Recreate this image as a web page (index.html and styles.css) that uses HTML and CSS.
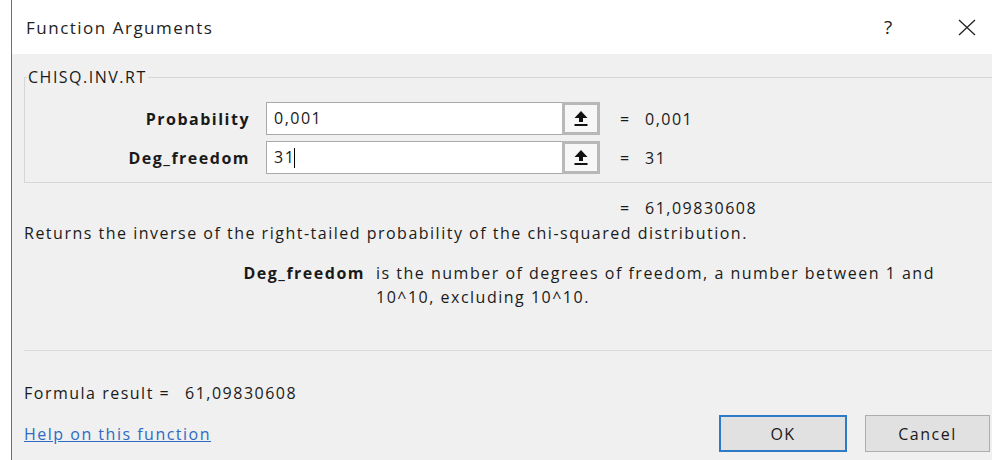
FILE: index.html
```html
<!DOCTYPE html>
<html lang="en">
<head>
<meta charset="utf-8">
<title>Function Arguments</title>
<link rel="stylesheet" href="styles.css">
</head>
<body>
<div class="dialog">
  <header class="titlebar">
    <span class="title">Function Arguments</span>
    <div class="title-actions">
      <span class="help-btn">?</span>
      <span class="close-btn">
        <svg width="18" height="17" viewBox="0 0 18 17"><path d="M1 1 L17 16 M17 1 L1 16" stroke="#222" stroke-width="1.3" fill="none"/></svg>
      </span>
    </div>
  </header>
  <main class="body">
    <fieldset class="group">
      <legend class="group-name">CHISQ.INV.RT</legend>
      <div class="arg-grid">
        <label class="arg-label">Probability</label>
        <div class="ref-field">
          <span class="ref-input">0,001</span>
          <span class="ref-btn">
            <svg width="14" height="16" viewBox="0 0 14 16"><path d="M7 0 L13.5 7 L9 7 L9 11 L5 11 L5 7 L0.5 7 Z" fill="#111"/><rect x="0.5" y="13" width="13" height="2" fill="#111"/></svg>
          </span>
        </div>
        <span class="eq">=</span>
        <span class="arg-value">0,001</span>

        <label class="arg-label">Deg_freedom</label>
        <div class="ref-field">
          <span class="ref-input">31<span class="caret"></span></span>
          <span class="ref-btn">
            <svg width="14" height="16" viewBox="0 0 14 16"><path d="M7 0 L13.5 7 L9 7 L9 11 L5 11 L5 7 L0.5 7 Z" fill="#111"/><rect x="0.5" y="13" width="13" height="2" fill="#111"/></svg>
          </span>
        </div>
        <span class="eq">=</span>
        <span class="arg-value">31</span>
      </div>
    </fieldset>

    <div class="result-line"><span class="eq">=</span><span>61,09830608</span></div>
    <p class="description">Returns the inverse of the right-tailed probability of the chi-squared distribution.</p>

    <div class="arg-help">
      <span class="arg-help-name">Deg_freedom</span>
      <span class="arg-help-text">is the number of degrees of freedom, a number between 1 and 10^10, excluding 10^10.</span>
    </div>

    <hr class="separator">

    <div class="formula-result"><span class="formula-label">Formula result =</span><span>61,09830608</span></div>

    <footer class="footer">
      <a class="help-link" href="#">Help on this function</a>
      <div class="buttons">
        <button class="btn btn-default">OK</button>
        <button class="btn">Cancel</button>
      </div>
    </footer>
  </main>
</div>
</body>
</html>
```

FILE: styles.css
```css
html, body {
  margin: 0;
  height: 100%;
  overflow: hidden;
  background: #ffffff;
}

body {
  font-family: "Open Sans", "Noto Sans", sans-serif;
  font-size: 16px;
  letter-spacing: 1.5px;
  color: #1a1a1a;
}

.dialog {
  margin-left: 11px;
  height: 100%;
  border-left: 1px solid #6e6e6e;
  display: flex;
  flex-direction: column;
}

.titlebar {
  height: 54px;
  flex: none;
  background: #ffffff;
  display: flex;
  align-items: center;
  padding-left: 14px;
}

.title {
  font-size: 17px;
  color: #222;
}

.title-actions {
  margin-left: auto;
  display: flex;
  align-items: center;
}

.help-btn {
  width: 20px;
  text-align: center;
  font-size: 19px;
  letter-spacing: 0;
  color: #222;
  margin-right: 60px;
}

.close-btn {
  display: flex;
  margin-right: 16px;
}

.body {
  flex: 1;
  background: #f0f0f0;
  padding: 0 2px 0 12px;
  display: flex;
  flex-direction: column;
}

.group {
  margin: 12px -30px 0 0;
  padding: 14px 0 8px 0;
  border: 1px solid #d6d6d6;
  min-width: 0;
}

.group-name {
  padding: 0 1px;
  margin-left: 2px;
  line-height: 22px;
  font-size: 16px;
}

.arg-grid {
  display: grid;
  grid-template-columns: 241px 334px 45px auto;
  row-gap: 6px;
  align-items: center;
}

.arg-label {
  font-weight: bold;
  text-align: right;
  padding-right: 16px;
}

.arg-grid .eq {
  padding-left: 20px;
}

.ref-field {
  display: flex;
  height: 33px;
  box-sizing: border-box;
  border: 1px solid #a9a9a9;
  background: #ffffff;
}

.ref-input {
  flex: 1;
  padding-left: 7px;
  line-height: 31px;
  display: flex;
  align-items: center;
}

.caret {
  display: inline-block;
  width: 1px;
  height: 20px;
  background: #000;
  margin-left: -1px;
}

.ref-btn {
  width: 38px;
  margin: -1px -1px -1px 0;
  box-sizing: border-box;
  border: 3px solid #b8b8b8;
  background: #f7f7f7;
  display: flex;
  align-items: center;
  justify-content: center;
}

.eq {
  display: inline-block;
}

.result-line {
  margin: 13px 0 0 596px;
  line-height: 25px;
}

.result-line .eq {
  width: 25px;
}

.description {
  margin: 0;
  line-height: 25px;
}

.arg-help {
  margin-top: 15px;
  display: grid;
  grid-template-columns: 341px 1fr;
  column-gap: 11px;
  line-height: 24px;
}

.arg-help-name {
  font-weight: bold;
  text-align: right;
}

.arg-help-text {
  max-width: 590px;
}

.separator {
  margin: 41px -30px 0 0;
  border: none;
  border-top: 1px solid #d9d9d9;
  height: 0;
}

.formula-result {
  margin-top: 30px;
  line-height: 24px;
}

.formula-label {
  display: inline-block;
  width: 161px;
}

.footer {
  margin-top: 10px;
  display: flex;
  align-items: center;
}

.help-link {
  color: #2d6bc4;
  text-decoration: underline;
}

.buttons {
  margin-left: auto;
  display: flex;
  gap: 18px;
}

.btn {
  height: 37px;
  width: 125px;
  font-family: inherit;
  font-size: 16px;
  letter-spacing: inherit;
  color: #1a1a1a;
  background: #e1e1e1;
  border: 1px solid #adadad;
}

.btn-default {
  width: 128px;
  border: 2px solid #2f7ac6;
}
```
